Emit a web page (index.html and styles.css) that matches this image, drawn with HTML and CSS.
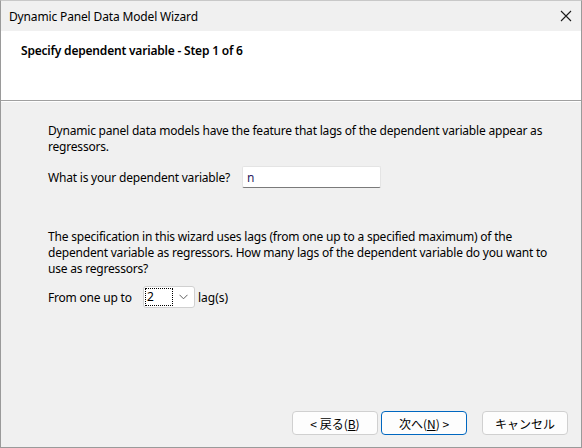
FILE: index.html
```html
<!DOCTYPE html>
<html lang="en">
  <head>
    <meta charset="UTF-8" />
    <title>Dynamic Panel Data Model Wizard</title>
    <link rel="stylesheet" href="styles.css">
  </head>
  <body>
    <div class="window">
      <div class="titlebar">
        <span class="title">Dynamic Panel Data Model Wizard</span>
        <svg class="close" width="12" height="12" viewBox="0 0 12 12">
          <path d="M1 1 L11 11 M11 1 L1 11" stroke="#1a1a1a" stroke-width="1.1" fill="none" />
        </svg>
      </div>

      <div class="header">
        <h1>Specify dependent variable - Step 1 of 6</h1>
      </div>

      <div class="content">
        <p class="text">
          Dynamic panel data models have the feature that lags of the dependent variable appear as regressors.
        </p>
        <div class="row">
          <label class="label-dep" for="dep-var">What is your dependent variable?</label>
          <input type="text" id="dep-var" class="edit" value="n" />
        </div>

        <p class="text text-lags">
          The specification in this wizard uses lags (from one up to a specified maximum) of the dependent variable as regressors. How many lags of the dependent variable do you want to use as regressors?
        </p>
        <div class="row row-lags">
          <span class="label-lags">From one up to</span>
          <div class="combo">
            <span class="combo-value"><span class="focus">2</span></span>
            <svg class="chevron" width="9" height="6" viewBox="0 0 9 6">
              <path d="M0.5 0.8 L4.5 4.8 L8.5 0.8" stroke="#606060" stroke-width="1" fill="none" />
            </svg>
          </div>
          <span class="unit">lag(s)</span>
        </div>
      </div>

      <div class="footer">
        <button class="btn">&lt;&nbsp;戻る(<u>B</u>)</button>
        <button class="btn btn-default">次へ(<u>N</u>)&nbsp;&gt;</button>
        <button class="btn btn-cancel">キャンセル</button>
      </div>
    </div>
  </body>
</html>
```
FILE: styles.css
```css
* {
  box-sizing: border-box;
}
body {
  margin: 0;
  font-family: "Noto Sans", "Noto Sans CJK JP", sans-serif;
  font-size: 12px;
  color: #000;
  background: #fff;
}
.window {
  width: 582px;
  height: 448px;
  display: flex;
  flex-direction: column;
  background-color: #f0f0f0;
  border: 1px solid #9a9a9a;
  border-top-color: #c8c8c8;
}
.titlebar {
  height: 30px;
  display: flex;
  align-items: center;
  justify-content: space-between;
  padding: 0 9px 0 8px;
  background-color: #f0f0f0;
}
.title {
  font-size: 12px;
  letter-spacing: -0.15px;
}
.close {
  margin-top: -1px;
}
.header {
  height: 70px;
  background: #fff;
  border-bottom: 1px solid #a0a0a0;
  box-shadow: 0 1px 0 #fff;
  padding: 11px 20px;
}
h1 {
  margin: 0;
  font-size: 12px;
  font-weight: 600;
  letter-spacing: -0.2px;
}
.content {
  flex: 1;
  padding: 22px 20px 0 47px;
}
.text {
  margin: 0;
  line-height: 16px;
  width: 500px;
  letter-spacing: -0.2px;
}
.text-lags {
  margin-top: 41px;
}
.row {
  display: flex;
  align-items: center;
  height: 22px;
  margin-top: 11px;
}
.row-lags {
  margin-top: 9px;
}
.label-dep {
  width: 194px;
  letter-spacing: -0.2px;
}
.label-lags {
  width: 95px;
  letter-spacing: -0.2px;
}
.edit {
  width: 139px;
  height: 22px;
  border: 1px solid #e4e4e4;
  border-bottom: 1px solid #7a7a7a;
  border-radius: 2px;
  background: #fff;
  padding: 0 4px;
  font: inherit;
  color: #2a1a5e;
  outline: none;
}
.combo {
  width: 52px;
  height: 22px;
  display: flex;
  align-items: center;
  justify-content: space-between;
  background: #fff;
  border: 1px solid #d0d0d0;
  border-radius: 3px;
  padding: 1px 6px 1px 1px;
}
.combo-value {
  display: flex;
  width: 28px;
  height: 18px;
}
.focus {
  flex: 1;
  border: 1px dotted #000;
  padding-left: 1px;
  line-height: 15px;
}
.unit {
  margin-left: 3px;
}
.footer {
  display: flex;
  justify-content: flex-end;
  padding: 0 13px 12px 0;
}
.btn {
  width: 86px;
  height: 24px;
  margin-left: 3px;
  padding: 0;
  font-family: "Noto Sans CJK JP", "Noto Sans", sans-serif;
  font-size: 12px;
  color: #000;
  background: #fdfdfd;
  border: 1px solid #d0d0d0;
  border-radius: 4px;
}
.btn-default {
  border-color: #0067c0;
}
.btn-cancel {
  margin-left: 15px;
}
```
